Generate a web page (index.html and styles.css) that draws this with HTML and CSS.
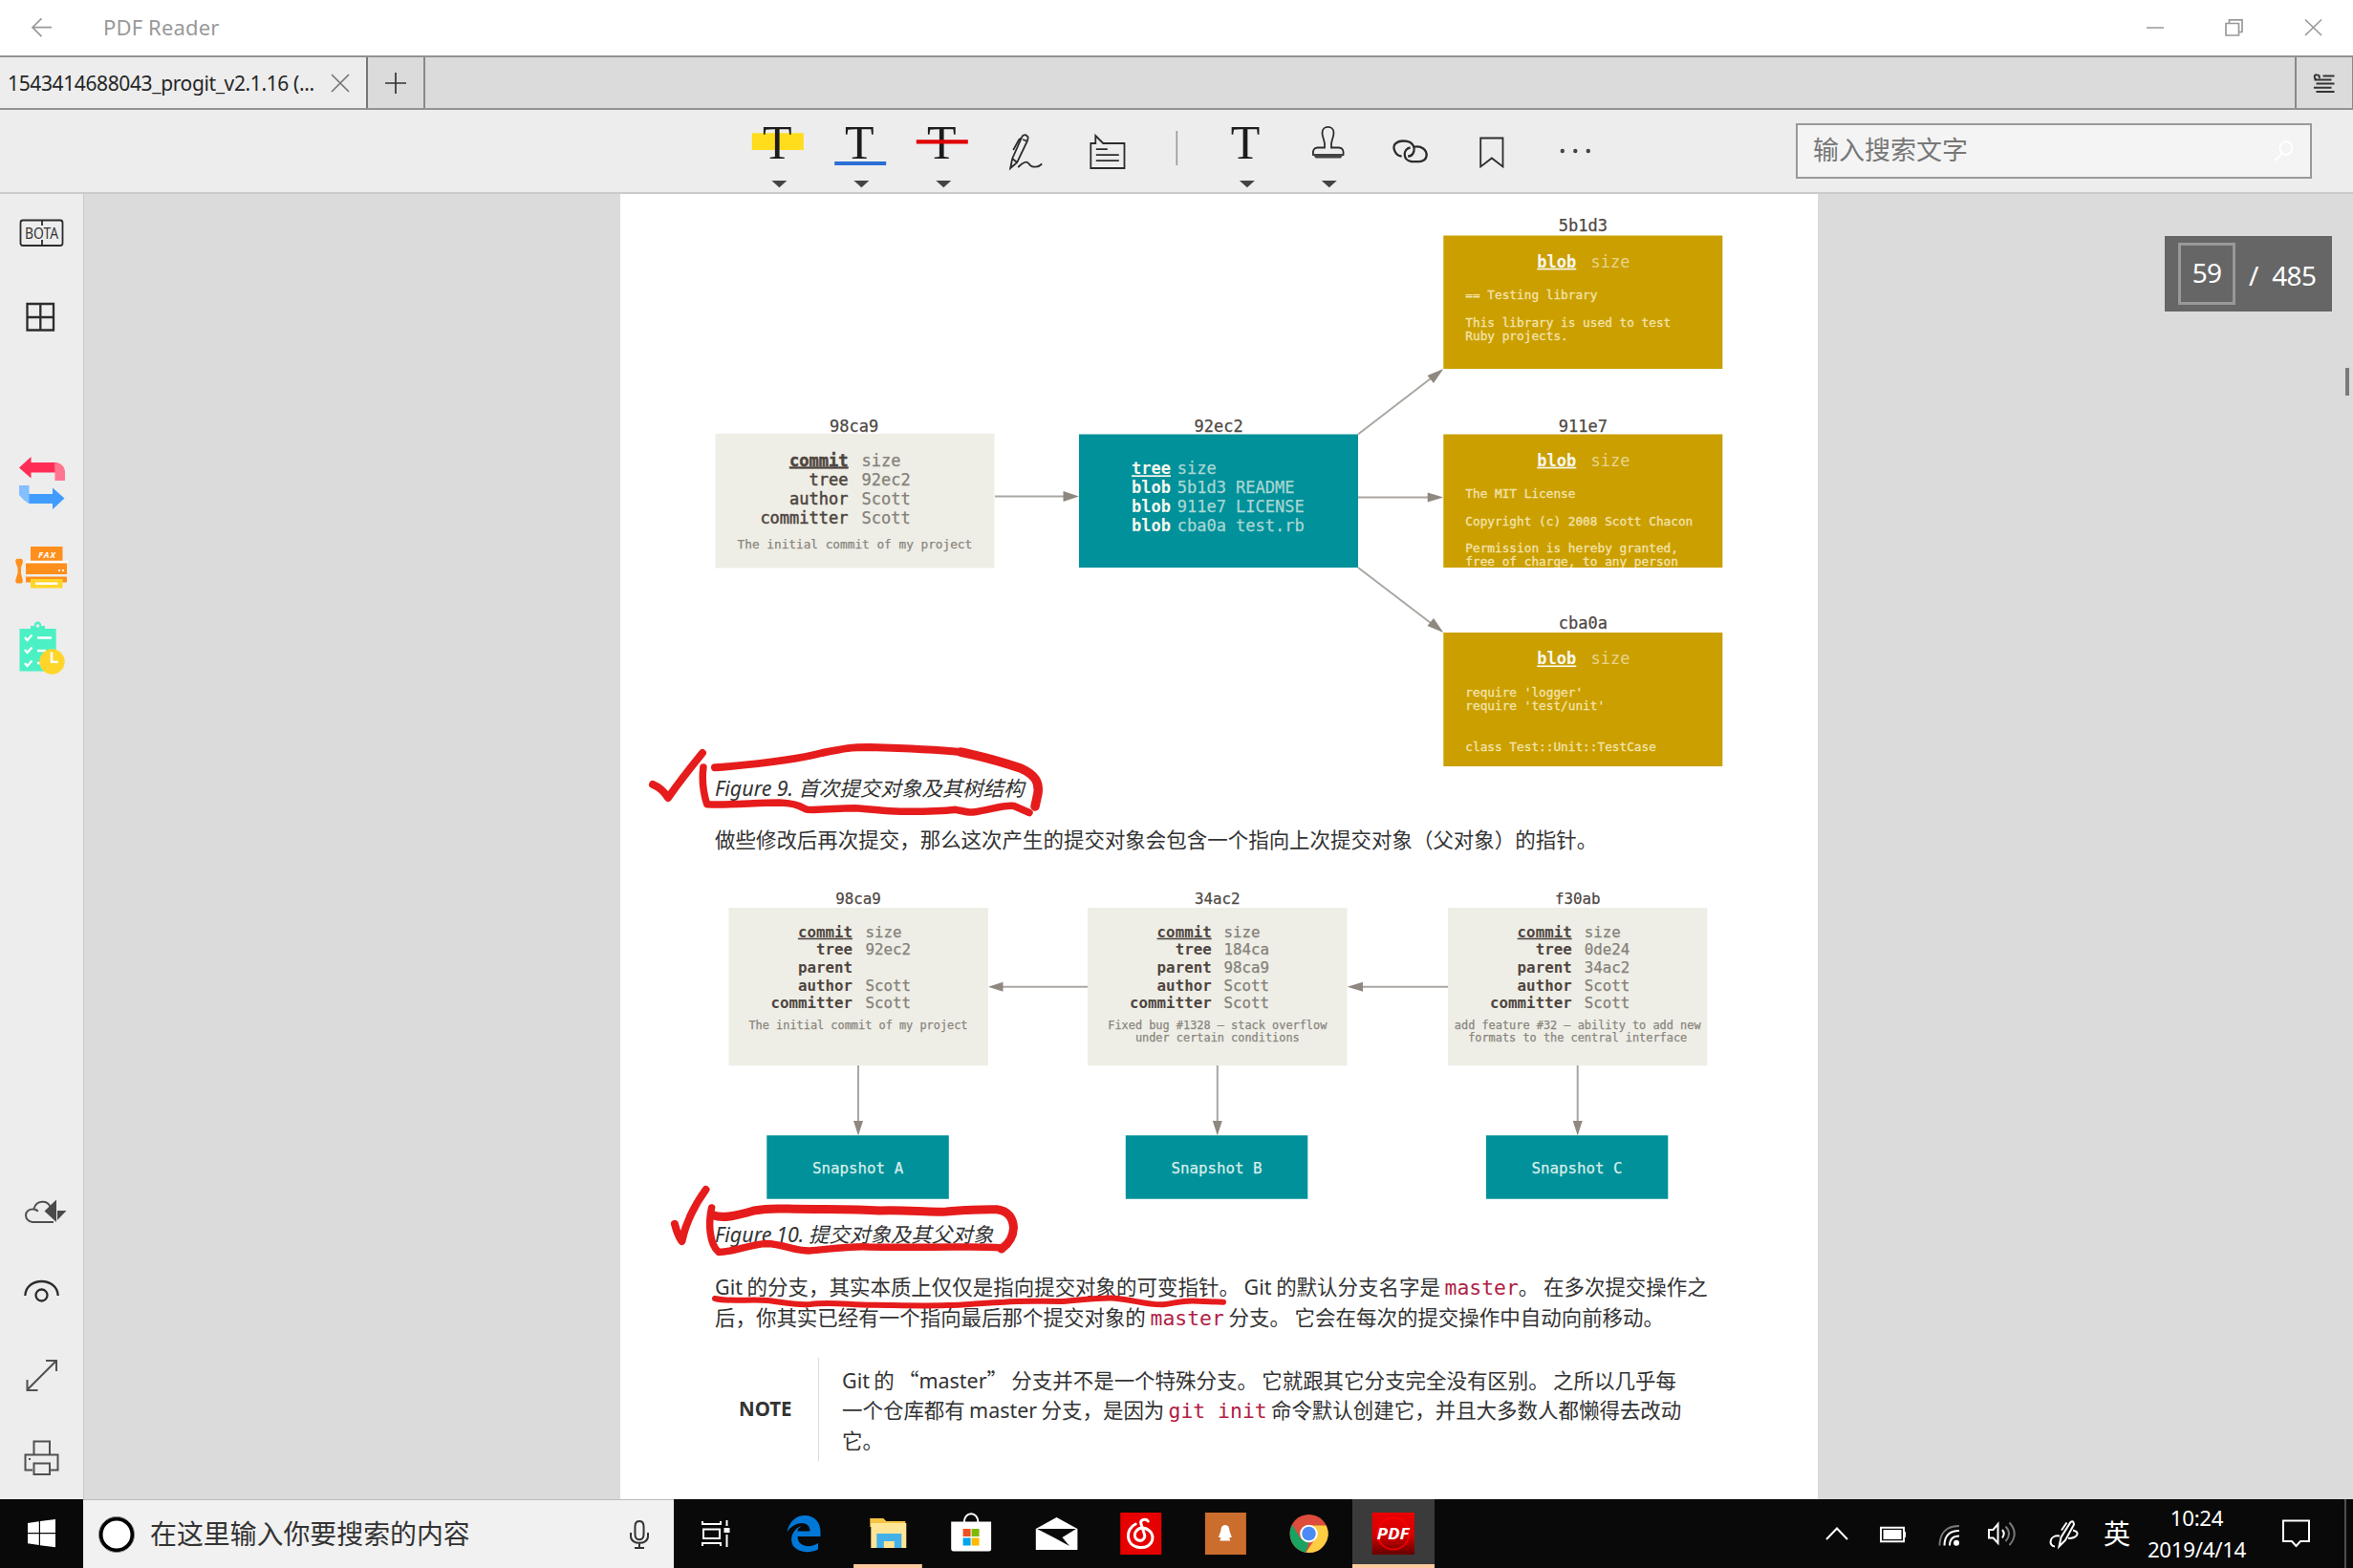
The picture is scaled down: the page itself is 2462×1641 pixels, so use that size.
FILE: index.html
```html
<!DOCTYPE html>
<html lang="zh-CN">
<head>
<meta charset="utf-8">
<title>PDF Reader</title>
<link rel="stylesheet" href="styles.css">
</head>
<body>
<div class="app">
  <header class="titlebar">
    <svg class="back" width="87" height="57" viewBox="0 0 87 57"><path d="M54 28.7H34M43.5 19.3L34 28.7L43.5 38.2"/></svg>
    <span class="app-name">PDF Reader</span>
    <svg class="window-buttons" width="262" height="57" viewBox="2200 0 262 57"><path d="M2246 29H2264M2329 24.5H2342.500V37H2329ZM2332.500 24.500V20.800H2346V33.500H2342.500M2412 20.500L2429 37M2429 20.500L2412 37"/></svg>
  </header>

  <nav class="tabs">
    <div class="tab"><span class="tab-name">1543414688043_progit_v2.1.16 (...</span>
      <svg width="20" height="20" viewBox="0 0 20 20"><path d="M1 1L19 19M19 1L1 19"/></svg></div>
    <div class="tab-add"><svg width="24" height="24" viewBox="0 0 24 24"><path d="M12 1V23M1 12H23"/></svg></div>
    <div class="tab-menu"><svg width="24" height="22" viewBox="2419.500 77 24 22"><path d="M2430 80.500H2442M2421 84.500H2439M2423 88.500H2442M2420.500 92.700H2439M2423 97H2442M2423 84.500C2420 82 2421 79 2423.500 79.200C2426 79.300 2427 81 2426 83"/></svg></div>
  </nav>

  <div class="toolbar">
    <div class="tools">
      <svg class="tool" viewBox="769.600 115 86.400 87"><path class="mark-yellow" d="M786.400 139.300H840.400V157H786.400Z"/><text class="glyph-t" x="812.800" y="166.500">T</text><path class="caret" d="M807 189H823L815 196.300Z"/></svg>
      <svg class="tool" viewBox="856 115 86.400 87"><text class="glyph-t" x="899.200" y="166.500">T</text><path class="mark-blue" d="M873.200 169H927.200V173H873.200Z"/><path class="caret" d="M893.400 189H909.400L901.400 196.300Z"/></svg>
      <svg class="tool" viewBox="942.400 115 86.400 87"><text class="glyph-t" x="985.800" y="166.500">T</text><path class="mark-red" d="M959.200 146.300H1013.200V150.500H959.200Z"/><path class="caret" d="M979.700 189H995.700L987.700 196.300Z"/></svg>
      <svg class="tool" viewBox="1028.800 115 86.400 87"><path class="line" d="M1057 176L1059 166L1069.500 142.500Q1072.500 139.500 1075.500 143.500L1075 147L1064 170ZM1059 166L1064 170M1070 146L1075 148M1069 144L1066 146L1060 157M1065 175Q1073 167 1076 171T1082 174.500Q1086 175.500 1090 171.500"/></svg>
      <svg class="tool" viewBox="1115.200 115 86.400 87"><path class="line" d="M1141.500 176V150H1146.500V142L1154.500 150H1176.700V176ZM1147 156.200H1159M1147 162.200H1171M1147 168.200H1171"/></svg>
      <svg class="tool-divider" viewBox="0 0 58 87"><path d="M29.300 22V58"/></svg>
      <svg class="tool" viewBox="1259.600 115 86.400 87"><text class="glyph-t" x="1302.700" y="166.500">T</text><path class="caret" d="M1296.500 189H1312.500L1304.500 196.300Z"/></svg>
      <svg class="tool" viewBox="1346 115 86.400 87"><path class="line" d="M1386 154.500C1387 147 1383.500 145 1383.500 139C1383.500 130.800 1395.500 130.800 1395.500 139C1395.500 145 1392 147 1393 154.500H1401C1405 154.500 1406 157.500 1405.500 162H1374C1373.500 157.500 1374.500 154.500 1378.500 154.500Z"/><path class="solid" d="M1373.500 161H1406L1403 165.500H1376.500Z"/><path class="caret" d="M1382.800 189H1398.800L1390.800 196.300Z"/></svg>
      <svg class="tool" viewBox="1432.400 115 86.400 87"><path class="line thick" d="M1467 163.500C1460 163 1456 153 1461.500 149.500C1465 146.800 1472 147 1476 149C1483 154 1480 163.500 1473.500 163.500M1479.500 153.800C1488 152 1493.500 157 1493 163C1492 170 1484 169.500 1477 169C1468 167.500 1468 156 1476 154.500"/></svg>
      <svg class="tool" viewBox="1518.800 115 86.400 87"><path class="line" d="M1549 144.500H1572.300V174.500L1560.700 165.500L1549 174.500Z"/></svg>
      <svg class="tool" viewBox="1605.200 115 86.400 87"><path class="solid" d="M1632.800 158a2.200 2.200 0 1 0 4.400 0a2.200 2.200 0 1 0-4.400 0M1646.300 158a2.200 2.200 0 1 0 4.400 0a2.200 2.200 0 1 0-4.400 0M1659.800 158a2.200 2.200 0 1 0 4.400 0a2.200 2.200 0 1 0-4.400 0"/></svg>
    </div>
    <div class="find"><span>输入搜索文字</span>
      <svg width="20" height="22" viewBox="0 0 20 22"><ellipse cx="13" cy="8" rx="6.500" ry="7"/><path d="M9 13.500L1 21"/></svg></div>
  </div>

  <main class="workspace">
    <aside class="sidebar">
      <div class="side-group">
        <svg viewBox="0 203 87 86" height="86"><path class="line" d="M24 230.500H63Q65.500 230.500 65.500 233V254.500Q65.500 257 63 257H24Q21.500 257 21.500 254.500V233Q21.500 230.500 24 230.500ZM44 230.500V236M44 251V257"/><text class="bota" x="43.500" y="250" textLength="35" lengthAdjust="spacingAndGlyphs">BOTA</text></svg>
        <svg viewBox="0 289 87 86" height="86"><path class="line thick" d="M28.500 318H56V345.500H28.500ZM42.300 318V345.500M28.500 332H56"/></svg>
      </div>
      <div class="side-group">
        <svg viewBox="0 460 87 90" height="90"><path fill="#ff2d55" d="M20 489.500L32.500 478V484H58Q67 485 67 494.500H32.500V500.500Z"/><path fill="#ff758f" d="M57 484.500Q68 484.500 68 495V503H57.500V494.500Z"/><path fill="#409cff" d="M67.500 521.500L55 510.500V517H30V527H55V533Z"/><path fill="#84bfff" d="M20 508H30.500V527Q27 526 20 518Z"/></svg>
        <svg viewBox="0 550 87 85" height="85"><g fill="#ff8f1c"><path d="M32 572H65.500V587H32ZM27 589.500H70V601H27ZM27 603.500H70V609.500H27Z"/><path d="M18 584.700H22Q24.500 585 23.700 589L22 594V600L23.700 607Q24 610.500 22 610.500H18Q15.500 610 16.500 606L18.500 600V594L16.500 589Q15.500 585 18 584.700Z"/></g><path fill="#fff" d="M27 586.700H71V589H27Z"/><path fill="#ffd52b" d="M32 606H65.500V615.500H32Z"/><path fill="#fff" d="M37 609.500H60.500V612H37ZM61 596h2v2h-2zM65 596h2v2h-2z"/><text class="fax" x="49.500" y="583.500">FAX</text></svg>
        <svg viewBox="0 635 87 90" height="90"><path fill="#4cf0c5" d="M20.500 658H32V655H36C35 649 44 649 43 655H47V658H58.700V702.500H20.500Z"/><circle cx="39.500" cy="655" r="1.800" fill="#ededed"/><g fill="none" stroke="#fff" stroke-width="2.300"><path d="M26 667L28.500 670L33.500 664.500M26 680L28.500 683L33.500 677.500M26 694L28.500 697L33.500 691.500M39 667.500H54M39 681H48M39 694H43"/></g><circle cx="54.500" cy="692.500" r="13.200" fill="#ffd52b"/><path d="M54 682.500V692.700H60.500" fill="none" stroke="#fff" stroke-width="2.500"/></svg>
      </div>
      <div class="side-group bottom">
        <svg viewBox="0 1230 87 86" height="86"><path class="line gray" d="M56 1279H34C24.500 1278 24.500 1264.500 35.500 1265.500Q39 1266 39.500 1268M35.500 1265C38 1256 49.500 1255.500 52.500 1263"/><path fill="#4a4a4a" d="M46.500 1267.500L59 1255.500V1279ZM60 1267H69.500L60 1277Z"/></svg>
        <svg viewBox="0 1316 87 80" height="80"><path class="line thick" d="M26.300 1356C27 1336 60 1336 60.700 1356"/><circle class="line thick" cx="43.500" cy="1355.500" r="6"/></svg>
        <svg viewBox="0 1396 87 84" height="84"><path class="line gray" d="M48 1424H59V1435M59 1424L28.500 1454.500M28.500 1444V1455H39.500"/></svg>
        <svg viewBox="0 1480 87 89" height="89"><path class="line gray" d="M35.500 1522V1508.500H52V1522M34 1538.500H26.500V1522.500H60.500V1538.500H53M35.500 1531.500H52V1543H35.500ZM30 1527h2"/></svg>
      </div>
    </aside>

    <article class="page">
      <svg class="figure" width="1056" height="602" viewBox="748 203 1056 602">
        <defs><clipPath id="license"><path d="M1510 454.500H1803V594H1510Z"/></clipPath></defs>
        <path class="box-commit" d="M748.500 453.700H1040.500V594.500H748.500Z"/>
        <path class="box-tree" d="M1129 454.500H1421V594H1129Z"/>
        <path class="box-blob" d="M1510.300 246.500H1802.300V386H1510.300ZM1510.300 454.500H1802.300V594H1510.300ZM1510.300 662H1802.300V802H1510.300Z"/>
        <path class="edge" d="M1041 519.500H1115M1421 520.500H1497M1421 454.500L1500 393.700M1421 594L1500 654.300"/>
        <path class="head" d="M1129 519.500L1112.500 514V525ZM1510.300 520.500L1493.700 515.500V525.500ZM1510.300 386L1493.500 393L1500 401ZM1510.300 662L1493.500 655L1500 647Z"/>
        <g class="mono-l">
          <g class="label"><text x="893.700" y="451.500">98ca9</text><text x="1275.200" y="451.500">92ec2</text><text x="1656.300" y="242">5b1d3</text><text x="1656.300" y="451.800">911e7</text><text x="1656.300" y="658">cba0a</text></g>
          <g class="key"><text class="strong" x="887.500" y="487.600">commit</text><text x="887.500" y="507.600">tree</text><text x="887.500" y="527.600">author</text><text x="887.500" y="547.600">committer</text></g>
          <g class="value"><text x="901.500" y="487.600">size</text><text x="901.500" y="507.600">92ec2</text><text x="901.500" y="527.600">Scott</text><text x="901.500" y="547.600">Scott</text></g>
          <g class="white"><text class="u" x="1184" y="496.300">tree</text><text x="1184" y="516.200">blob</text><text x="1184" y="536.200">blob</text><text x="1184" y="556">blob</text></g>
          <g class="pale-teal"><text x="1231.700" y="496.300">size</text><text x="1231.700" y="516.200">5b1d3 README</text><text x="1231.700" y="536.200">911e7 LICENSE</text><text x="1231.700" y="556">cba0a test.rb</text></g>
          <g class="white"><text class="u" x="1608.300" y="279.700">blob</text><text class="u" x="1608.300" y="487.700">blob</text><text class="u" x="1608.300" y="695.400">blob</text></g>
          <g class="pale-gold"><text x="1664.500" y="279.700">size</text><text x="1664.500" y="487.700">size</text><text x="1664.500" y="695.400">size</text></g>
        </g>
        <g class="mono-s">
          <text class="message" x="894.400" y="574.200">The initial commit of my project</text>
          <g class="code"><text x="1533.300" y="313.300">== Testing library</text><text x="1533.300" y="341.800">This library is used to test</text><text x="1533.300" y="356">Ruby projects.</text></g>
          <g class="code" clip-path="url(#license)"><text x="1533.300" y="521">The MIT License</text><text x="1533.300" y="549.500">Copyright (c) 2008 Scott Chacon</text><text x="1533.300" y="578">Permission is hereby granted,</text><text x="1533.300" y="592.300">free of charge, to any person</text></g>
          <g class="code"><text x="1533.300" y="729">require 'logger'</text><text x="1533.300" y="743.300">require 'test/unit'</text><text x="1533.300" y="786">class Test::Unit::TestCase</text></g>
        </g>
      </svg>
      <p class="caption first">Figure 9. 首次提交对象及其树结构</p>
      <p class="para lead">做些修改后再次提交，那么这次产生的提交对象会包含一个指向上次提交对象（父对象）的指针。</p>

      <svg class="figure second" width="1056" height="335" viewBox="748 925 1056 335">
        <path class="box-commit" d="M762.500 950H1034V1115.300H762.500ZM1138 950H1409.600V1115.300H1138ZM1515 950H1786.300V1115.300H1515Z"/>
        <path class="box-tree" d="M802.300 1188.300H992.800V1254.700H802.300ZM1177.800 1188.300H1368.300V1254.700H1177.800ZM1555 1188.300H1745.300V1254.700H1555Z"/>
        <path class="edge" d="M1138 1032.700H1048M1515 1032.700H1424M898 1115V1175M1273.800 1115V1175M1650.700 1115V1175"/>
        <path class="head" d="M1034 1032.700L1049.500 1027.700V1037.700ZM1409.600 1032.700L1426 1027.700V1037.700ZM898 1188.500L893 1173H903ZM1273.800 1188.500L1268.800 1173H1278.800ZM1650.700 1188.500L1645.700 1173H1655.700Z"/>
        <g class="mono-m">
          <g class="label"><text x="898" y="946">98ca9</text><text x="1273.800" y="946">34ac2</text><text x="1650.700" y="946">f30ab</text></g>
          <g class="key bold"><text class="u" x="892" y="980.700">commit</text><text x="892" y="999.300">tree</text><text x="892" y="1017.900">parent</text><text x="892" y="1036.500">author</text><text x="892" y="1055">committer</text></g>
          <g class="value"><text x="905.500" y="980.700">size</text><text x="905.500" y="999.300">92ec2</text><text x="905.500" y="1036.500">Scott</text><text x="905.500" y="1055">Scott</text></g>
          <g class="key bold"><text class="u" x="1267.700" y="980.700">commit</text><text x="1267.700" y="999.300">tree</text><text x="1267.700" y="1017.900">parent</text><text x="1267.700" y="1036.500">author</text><text x="1267.700" y="1055">committer</text></g>
          <g class="value"><text x="1280.500" y="980.700">size</text><text x="1280.500" y="999.300">184ca</text><text x="1280.500" y="1017.900">98ca9</text><text x="1280.500" y="1036.500">Scott</text><text x="1280.500" y="1055">Scott</text></g>
          <g class="key bold"><text class="u" x="1644.700" y="980.700">commit</text><text x="1644.700" y="999.300">tree</text><text x="1644.700" y="1017.900">parent</text><text x="1644.700" y="1036.500">author</text><text x="1644.700" y="1055">committer</text></g>
          <g class="value"><text x="1657.800" y="980.700">size</text><text x="1657.800" y="999.300">0de24</text><text x="1657.800" y="1017.900">34ac2</text><text x="1657.800" y="1036.500">Scott</text><text x="1657.800" y="1055">Scott</text></g>
          <g class="snapshot"><text x="897.600" y="1228.300">Snapshot A</text><text x="1273" y="1228.300">Snapshot B</text><text x="1650" y="1228.300">Snapshot C</text></g>
        </g>
        <g class="mono-xs message"><text x="898" y="1077.200">The initial commit of my project</text><text x="1273.800" y="1077.200">Fixed bug #1328 – stack overflow</text><text x="1273.800" y="1090.400">under certain conditions</text><text x="1650.700" y="1077.200">add feature #32 – ability to add new</text><text x="1650.700" y="1090.400">formats to the central interface</text></g>
      </svg>
      <p class="caption">Figure 10. 提交对象及其父对象</p>
      <p class="para">Git 的分支，其实本质上仅仅是指向提交对象的可变指针。 Git 的默认分支名字是 <code>master</code>。 在多次提交操作之<br>后，你其实已经有一个指向最后那个提交对象的 <code>master</code> 分支。 它会在每次的提交操作中自动向前移动。</p>
      <section class="note">
        <strong>NOTE</strong>
        <p>Git 的 <span class="cjk">“</span>master<span class="cjk">”</span> 分支并不是一个特殊分支。 它就跟其它分支完全没有区别。 之所以几乎每<br>一个仓库都有 master 分支，是因为 <code>git init</code> 命令默认创建它，并且大多数人都懒得去改动<br>它。</p>
      </section>

      <svg class="ink" width="1252" height="1366" viewBox="649 203 1252 1366">
        <path d="M683 821Q693 825 699 835Q713 815 735 788" stroke-width="8"/>
        <path d="M748 803.300C790 800 830 796 860 788C885 783 890 782 910 782C945 783 975 784 1005 787C1025 791 1050 798 1068 804" stroke-width="8"/>
        <path d="M1005 787C1025 791 1050 798 1068 804C1083 811 1087.500 818 1086 830L1083 844" stroke-width="9.500"/>
        <path d="M735.900 803C734 818 736 830 739.700 841.700C765 843 790 840 816 840C840 841 840 847 845 847.300C865 848 875 845.700 894 845.700C915 847 925 849 942 849.300C965 849.500 985 849 1000 847.300C1008 849 1013 850.500 1018 850C1035 848 1050 842 1061 843.500L1077 850.500" stroke-width="7.500"/>
        <path d="M706 1281Q709 1293 713.500 1299Q719 1272 738.500 1245" stroke-width="8"/>
        <path d="M747 1272C757 1276 775 1271 789 1267C804 1264 815 1265 824 1265C860 1266 890 1265 920 1267C950 1266 970 1269 990 1268C1010 1266 1025 1266 1043 1265.700C1055 1267 1060 1275 1060.500 1285C1060 1295 1056 1301 1048 1307" stroke-width="9"/>
        <path d="M744.600 1264C741 1280 742 1302 752 1310.500C770 1310 785 1302 802 1301.500C820 1302 830 1309 847 1309C870 1307 890 1304 909 1305C960 1306 1000 1304 1048 1305.700" stroke-width="7.500"/>
        <path d="M748 1359C765 1363 785 1359 803 1361C820 1363 830 1366 848 1365C870 1362 890 1366 916 1365.700C940 1366 965 1367 991 1366C1015 1366 1030 1363 1051 1362.700C1070 1361 1090 1362 1111.500 1362C1130 1361 1145 1358 1164 1358.500C1185 1360 1200 1366 1217 1365.300C1230 1364 1238 1360 1254 1361.700L1280 1362.700" stroke-width="6"/>
      </svg>
    </article>

    <div class="page-badge"><span class="current">59</span><span class="total">/&nbsp;485</span></div>
    <div class="scroll-thumb"></div>
  </main>

  <footer class="taskbar">
    <svg width="87" height="72" viewBox="0 1569 87 72"><path fill="#fff" d="M29 1594L40.800 1592.300V1604H29ZM42 1592.100L58 1590V1604H42ZM29 1605.200H40.800V1617L29 1615.300ZM42 1605.200H58V1619.300L42 1617.200Z"/></svg>
    <div class="task-search">
      <svg width="42" height="42" viewBox="0 0 42 42"><circle cx="21" cy="21" r="16.500" fill="#fff" stroke="#000" stroke-width="4"/><circle cx="21" cy="21" r="18.600" fill="none" stroke="#888" stroke-width="1"/></svg>
      <span>在这里输入你要搜索的内容</span>
      <svg class="mic" width="24" height="32" viewBox="656 1589 24 32"><path d="M668 1591C673.500 1591 672.500 1596 672.500 1605C672.500 1612 663.500 1612 663.500 1605C663.500 1596 662.500 1591 668 1591ZM659 1603V1607C659 1616 677 1616 677 1607V1603M668 1613.500V1619M663 1619H673"/></svg>
    </div>
    <div class="apps">
      <svg viewBox="705 1569 88 72"><path fill="none" stroke="#fff" stroke-width="2" d="M735 1592V1595H754V1592M735 1618V1615H754V1618M736 1600.500H753V1610H736ZM760.500 1591V1597M760.500 1606V1619"/><path fill="#fff" d="M757.500 1599h6v5h-6z"/></svg>
      <svg viewBox="794 1569 88 72"><path fill="#0078d7" d="M823.500 1603C826 1592 833 1586 842 1586C853 1586 858.500 1594 858.500 1603V1608H834.500C835 1620 849 1620 856 1615V1621.500C847 1626 836 1625 830 1618C825 1609 831 1599 839 1597C835 1599 834.500 1602 834.500 1602.500H847.500C848 1592 833 1590 823.500 1603Z"/></svg>
      <svg viewBox="882.700 1569 88 72"><path fill="#f6c445" d="M910 1589H924L927 1592H947V1598H910Z"/><path fill="#ffe596" d="M911 1594H948V1620H911Z"/><path fill="#43b1e8" d="M917 1605H943V1620H935.500V1613H924.500V1620H917Z"/><path fill="#fcca9e" d="M892.800 1637H964.500V1641H892.800Z"/></svg>
      <svg viewBox="971.400 1569 88 72"><path fill="none" stroke="#fff" stroke-width="2" d="M1009 1594C1009 1581 1024 1581 1024 1594"/><path fill="#fff" d="M995.600 1592.500H1037.500V1621Q1037.500 1623.500 1035 1623.500H998Q995.600 1623.500 995.600 1621Z"/><path fill="#f25022" d="M1008 1600h8v8h-8z"/><path fill="#7fba00" d="M1017 1600h8v8h-8z"/><path fill="#00a4ef" d="M1008 1609.500h8v8h-8z"/><path fill="#ffb900" d="M1017 1609.500h8v8h-8z"/></svg>
      <svg viewBox="1060 1569 88 72"><path fill="#fff" d="M1083.800 1600L1105.500 1588L1127.400 1600V1622H1083.800Z"/><path fill="#0a0a0a" d="M1085 1600H1126L1111.500 1609L1119 1618L1102.500 1609Z"/></svg>
      <svg viewBox="1148.800 1569 88 72"><path fill="#e60000" d="M1172 1583H1215V1627H1172Z"/><path fill="none" stroke="#fff" stroke-width="3" stroke-linecap="round" d="M1188 1595C1177 1600 1177 1618 1192 1619.500C1207 1621 1211 1604 1198 1599.500C1190 1597 1184 1606 1189 1611C1195 1615 1199 1609 1197 1605L1193.500 1594C1193 1590 1199 1589 1201 1592"/></svg>
      <svg viewBox="1237.600 1569 88 72"><path fill="#cb6d2d" d="M1260.500 1583H1303.500V1627H1260.500Z"/><path fill="#fff" d="M1281.500 1596Q1286 1596 1286 1602L1288.500 1609L1286 1609Q1286 1611 1287 1612.500H1276L1277 1609L1274.500 1609L1277 1602Q1277 1596 1281.500 1596Z"/></svg>
      <svg viewBox="1326.500 1569 88 72"><circle cx="1370" cy="1605" r="20" fill="#de4c3c"/><path fill="#1aa260" d="M1352.500 1595.500L1362 1611L1370 1613.500L1367 1624.800A20 20 0 0 1 1352.500 1595.500Z"/><path fill="#ffcd42" d="M1370 1596.500H1388.200A20 20 0 0 1 1367 1624.800L1376 1611Z"/><circle cx="1370" cy="1605" r="9.300" fill="#fff"/><circle cx="1370" cy="1605" r="7.300" fill="#4c8bf5"/></svg>
      <svg class="active" viewBox="1415 1569 86 72"><defs><linearGradient id="pdf" x2="0" y2="1"><stop offset="0" stop-color="#ea0000"/><stop offset=".55" stop-color="#d40000"/><stop offset="1" stop-color="#650000"/></linearGradient></defs><path fill="url(#pdf)" d="M1435.700 1583H1480V1627H1435.700Z"/><circle cx="1458" cy="1605" r="16.500" fill="none" stroke="#f00" stroke-width="1.500"/><text class="pdf" x="1457.500" y="1611" textLength="34" lengthAdjust="spacingAndGlyphs">PDF</text><path fill="#fcca9e" d="M1415 1637H1501V1641H1415Z"/></svg>
    </div>
    <svg class="tray" width="300" height="72" viewBox="1890 1569 300 72"><g fill="none" stroke="#fff" stroke-width="2"><path d="M1911 1611L1922 1599.500L1933 1611M1968 1598.800H1992V1613.200H1968Z"/><path d="M2081 1601H2085.500L2090.500 1595V1615L2085.500 1609.500H2081ZM2095 1601Q2098.500 1605 2095 1609.500"/><path stroke="#777" d="M2098.500 1597.500Q2105.500 1605 2098.500 1613M2102.500 1593.500Q2113 1605 2102.500 1617M2029.500 1617.500C2029.500 1604 2037 1597 2050 1597"/><path d="M2034.500 1617.500C2034.500 1607 2040 1602 2050 1602M2040 1617.500C2040 1610.500 2043.500 1607.500 2050 1607.500"/><path d="M2154.500 1618.500L2156.500 1609L2166.500 1593Q2169.500 1590.500 2170 1595.500L2161 1612ZM2162.500 1593.500L2157 1601.500M2155 1607.500C2144 1606 2143 1618 2150 1618.500M2169 1601.500C2177 1603 2174 1610 2164 1610"/></g><path fill="#fff" d="M1970.500 1601H1989.500V1611H1970.500ZM1992 1603h2v6h-2z"/><circle cx="2047" cy="1614.700" r="3" fill="#fff"/></svg>
    <span class="ime">英</span>
    <div class="clock"><span>10:24</span><span>2019/4/14</span></div>
    <svg class="notify" width="105" height="72" viewBox="2357 1569 105 72"><path fill="none" stroke="#fff" stroke-width="2" d="M2389 1591.500H2416V1613H2407L2402.500 1618L2398 1613H2389Z"/><path stroke="#666" stroke-width="1.500" d="M2454 1569V1641"/></svg>
  </footer>
</div>
</body>
</html>
```

FILE: styles.css
```css
* { box-sizing: border-box; }
body { margin: 0; font-family: "Noto Sans", "Noto Sans CJK SC", sans-serif; color: #262626; }
.app { width: 2462px; height: 1641px; display: flex; flex-direction: column; overflow: hidden; background: #dbdbdb; }
p { margin: 0; }
svg { display: block; flex: none; }

.titlebar { height: 58px; background: #fff; display: flex; align-items: flex-start; color: #999; }
.titlebar svg { fill: none; stroke: #999; stroke-width: 1.7; }
.app-name { margin-left: 21px; font-size: 22px; line-height: 56px; letter-spacing: .15px; flex: 1; white-space: nowrap; }

.tabs { height: 57px; display: flex; border-top: 2px solid #929292; border-bottom: 2px solid #929292; }
.tabs svg { fill: none; stroke: #333; stroke-width: 1.7; }
.tab { width: 385px; background: #ededed; border-right: 2px solid #777; display: flex; align-items: center; justify-content: space-between; padding: 0 17px 0 8px; }
.tab svg { stroke: #777; }
.tab-name { font-size: 21px; letter-spacing: -.38px; white-space: nowrap; }
.tab-add { width: 60px; border-right: 2px solid #888; display: flex; align-items: center; justify-content: center; }
.tab-menu { width: 61px; margin-left: auto; border-left: 2px solid #888; border-right: 1px solid #888; display: flex; align-items: center; justify-content: center; }
.tab-menu svg { stroke-width: 2; }

.toolbar { height: 88px; background: #ededed; border-bottom: 2px solid #cbcbcb; display: flex; justify-content: space-between; align-items: center; padding: 0 43px 0 769.6px; }
.tools { display: flex; }
.tool { width: 86.4px; height: 87px; }
.tool-divider { width: 58px; height: 87px; stroke: #999; stroke-width: 1.6; }
.glyph-t { font: 50px "Liberation Serif", serif; fill: #1c1c1c; text-anchor: middle; }
.mark-yellow { fill: #ffdc1c; }
.mark-blue { fill: #2a6fd6; }
.mark-red { fill: #e00000; }
.caret, .solid { fill: #444; }
.line { fill: none; stroke: #2c2c2c; stroke-width: 1.8; }
.line.thick { stroke-width: 2.3; }
.line.gray { stroke: #505050; stroke-width: 2; }
.find { width: 540px; height: 58px; border: 2px solid #999; background: #f4f4f4; display: flex; align-items: center; justify-content: space-between; padding: 0 18px 0 16px; font: 27px "Noto Sans CJK SC", sans-serif; color: #777; }
.find span { padding-bottom: 5px; }
.find svg { fill: none; stroke: #fff; stroke-width: 1.8; }

.workspace { height: 1366px; display: flex; position: relative; }
.sidebar { width: 88px; background: #ededed; border-right: 1px solid #c8c8c8; display: flex; flex-direction: column; }
.sidebar svg { width: 87px; }
.side-group + .side-group { margin-top: 85px; }
.side-group.bottom { margin-top: auto; }
.bota { font: 17px "Noto Sans", sans-serif; fill: #333; text-anchor: middle; }
.fax { font: italic bold 9px "Noto Sans", sans-serif; fill: #fff; text-anchor: middle; letter-spacing: 1px; }

.page { position: relative; width: 1253px; margin-left: 561px; padding-left: 99px; background: #fff; overflow: hidden; }
.figure.second { margin-top: 30px; }
.box-commit { fill: #eeeee6; }
.box-tree { fill: #00919a; }
.box-blob { fill: #cb9f00; }
.edge { fill: none; stroke: #aaa6a2; stroke-width: 2; }
.head { fill: #8f8880; }
.mono-l, .mono-m, .mono-s, .mono-xs { font-family: "DejaVu Sans Mono", monospace; }
.mono-l { font-size: 17px; }
.mono-m { font-size: 15.8px; }
.mono-s { font-size: 12.75px; }
.mono-xs { font-size: 11.9px; }
.label { fill: #4e4843; stroke: #4e4843; stroke-width: .25; text-anchor: middle; }
.key { fill: #4e4540; text-anchor: end; stroke: #4e4540; stroke-width: .5; }
.key.bold { font-weight: 700; stroke: none; }
.strong { font-weight: 700; text-decoration: underline; }
.u { text-decoration: underline; }
.value { fill: #858079; stroke: #858079; stroke-width: .25; }
.message { fill: #8a857e; stroke: #8a857e; stroke-width: .25; text-anchor: middle; }
.white { fill: #f7f7ee; font-weight: 700; }
.pale-teal { fill: #a9d6d3; stroke: #a9d6d3; stroke-width: .25; }
.pale-gold { fill: #e8d48c; }
.code { fill: #f3e3ad; stroke: #f3e3ad; stroke-width: .3; }
.snapshot { fill: #d8eeea; stroke: #d8eeea; stroke-width: .25; text-anchor: middle; }

.para, .caption, .note { font-size: 21.47px; line-height: 31.6px; color: #333; white-space: nowrap; word-spacing: -.9px; }
.caption { margin-top: 16px; font-style: italic; }
.caption.first { margin-top: 4px; word-spacing: -.3px; }
.para { margin-top: 23.400px; }
.para.lead { margin-top: 22.8px; }
.para code, .note code { font: 21.4px/20px "DejaVu Sans Mono", monospace; color: #b02045; word-spacing: 0; }
.note { display: flex; align-items: center; margin-top: 27px; height: 108px; }
.note strong { width: 108px; padding-left: 25px; font-size: 20.5px; }
.note p { height: 108px; padding: 6.500px 0 0 24px; border-left: 1px solid #ddd; word-spacing: -1.3px; }
.cjk { font-family: "Noto Sans CJK SC", sans-serif; }
.ink { position: absolute; left: 0; top: 0; fill: none; stroke: #e61c1c; stroke-linecap: round; stroke-linejoin: round; }

.page-badge { position: absolute; left: 2265px; top: 43.5px; width: 175px; height: 79px; background: #666; color: #fff; display: flex; align-items: center; padding-left: 14px; font-size: 28px; letter-spacing: -.7px; }
.current { width: 60px; height: 65px; border: 3px solid #999; text-align: center; line-height: 57px; }
.total { margin-left: 14px; word-spacing: 8px; padding-top: 3px; }
.scroll-thumb { position: absolute; left: 2454px; top: 182px; width: 4px; height: 29px; background: #7a7a7a; }

.taskbar { height: 72px; background: #090909; color: #fff; display: flex; }
.task-search { width: 618px; background: #f1f1f1; border-top: 1px solid #bbb; display: flex; align-items: center; padding: 0 24px 0 14px; font: 27.9px "Noto Sans CJK SC", sans-serif; color: #333; }
.task-search span { margin-left: 14px; padding-bottom: 3px; flex: 1; white-space: nowrap; }
.mic { fill: none; stroke: #333; stroke-width: 2; }
.apps { display: flex; width: 796px; justify-content: space-between; }
.apps svg { width: 88px; height: 72px; }
.apps .active { width: 86px; background: #3b3b3b; }
.pdf { font: italic bold 16px "Noto Sans", sans-serif; fill: #fff; text-anchor: middle; }
.tray { margin-left: auto; }
.ime { width: 50px; padding-left: 11px; font: 28px/70px "Noto Sans CJK SC", sans-serif; }
.clock { width: 117px; display: flex; flex-direction: column; align-items: center; font-size: 22.3px; line-height: 33px; padding-top: 3px; letter-spacing: -.3px; }
```
